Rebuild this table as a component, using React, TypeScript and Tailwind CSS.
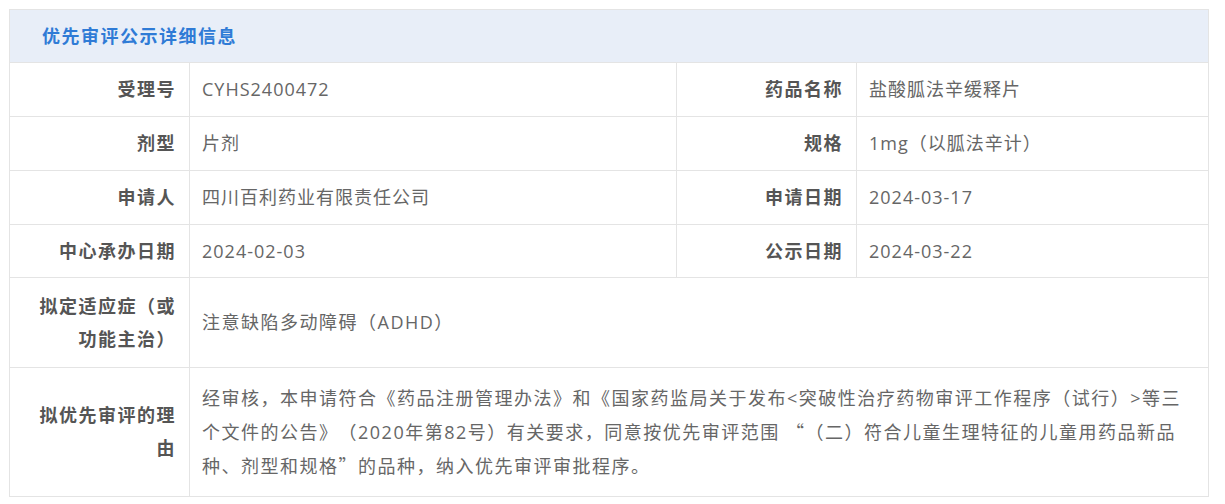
const rows: { label: string; value: string; label2: string; value2: string; h: string }[] = [
  { label: "受理号", value: "CYHS2400472", label2: "药品名称", value2: "盐酸胍法辛缓释片", h: "h-[54px]" },
  { label: "剂型", value: "片剂", label2: "规格", value2: "1mg（以胍法辛计）", h: "h-[54px]" },
  { label: "申请人", value: "四川百利药业有限责任公司", label2: "申请日期", value2: "2024-03-17", h: "h-[54px]" },
  { label: "中心承办日期", value: "2024-02-03", label2: "公示日期", value2: "2024-03-22", h: "h-[53px]" },
];

const cjk = { fontFamily: '"Noto Sans CJK SC", sans-serif' };

function Label({ children, className = "" }: { children: React.ReactNode; className?: string }) {
  return (
    <div
      className={`flex items-center justify-end px-[13px] text-right font-bold text-[#555] border-t border-[#e4e4e4] ${className}`}
    >
      <span>{children}</span>
    </div>
  );
}

function Value({ children, className = "" }: { children: React.ReactNode; className?: string }) {
  return (
    <div className={`flex items-center pl-[12px] pr-[13px] text-[#666] border-t border-l border-[#e4e4e4] ${className}`}>
      <span>{children}</span>
    </div>
  );
}

export default function App() {
  return (
    <div
      className="min-h-screen bg-white p-[9px] text-[18px] leading-[33px] tracking-[1.5px] [text-spacing-trim:space-all]"
      style={{ fontFamily: '"Open Sans", "Noto Sans CJK SC", sans-serif' }}
    >
      <div className="w-[1200px] border border-[#e4e4e4]">
        {/* header */}
        <div className="h-[52px] flex items-center px-[32px] bg-[#e8eef8] text-[#2f7bd6] font-bold">
          优先审评公示详细信息
        </div>

        <div className="grid grid-cols-[179px_487px_180px_1fr]">
          {rows.map((r) => (
            <div key={r.label} className="contents">
              <Label className={r.h}>{r.label}</Label>
              <Value className={r.h}>
                <span className="tracking-[1px]">{r.value}</span>
              </Value>
              <Label className={`${r.h} border-l`}>{r.label2}</Label>
              <Value className={r.h}>
                <span className="tracking-[1px]">{r.value2}</span>
              </Value>
            </div>
          ))}

          <Label className="h-[90px]">拟定适应症（或功能主治）</Label>
          <Value className="h-[90px] col-span-3">注意缺陷多动障碍（ADHD）</Value>

          <Label className="h-[129px]">拟优先审评的理由</Label>
          <Value className="h-[129px] col-span-3">
            经审核，本申请符合《药品注册管理办法》和《国家药监局关于发布&lt;突破性治疗药物审评工作程序（试行）&gt;等三个文件的公告》（2020年第82号）有关要求，同意按优先审评范围{" "}
            <span style={cjk}>“</span>（二）符合儿童生理特征的儿童用药品新品种、剂型和规格<span style={cjk}>”</span>的品种，纳入优先审评审批程序。
          </Value>
        </div>
      </div>
    </div>
  );
}
